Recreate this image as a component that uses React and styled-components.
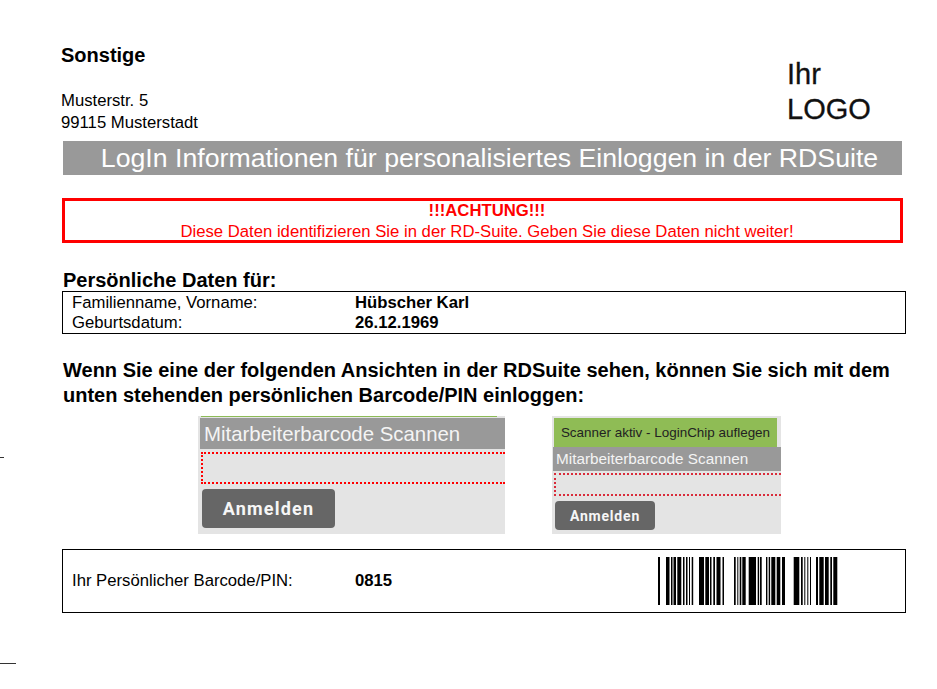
import React from 'react'
import styled, {createGlobalStyle} from 'styled-components'

const GlobalStyle = createGlobalStyle`
  html, body {
    margin: 0;
    background: #fff;
    color: #000;
    font-family: "Liberation Sans", Arial, sans-serif;
  }
`

const Page = styled.div`
  position: relative;
  width: 937px;
  height: 689px;
  padding: 44px 31px 0 61px;
  box-sizing: border-box;
  overflow: hidden;
`

const Header = styled.div`
  display: flex;
  justify-content: space-between;
  height: 97px;
`

const Company = styled.div`
  font-size: 20px;
  line-height: 22px;
  font-weight: 700;
`

const Address = styled.div`
  margin-top: 24px;
  font-size: 16.7px;
  line-height: 22px;
`

const Logo = styled.div`
  width: 119px;
  margin-top: 13px;
  font-size: 29px;
  line-height: 35px;
  color: #111;
  -webkit-text-stroke: 0.3px #111;
`

const Banner = styled.div`
  margin-left: 2px;
  width: 839px;
  height: 34px;
  padding-left: 14px;
  box-sizing: border-box;
  background: #999;
  color: #fff;
  font-size: 26.7px;
  line-height: 35px;
  text-align: center;
  white-space: nowrap;
`

const Alert = styled.div`
  margin: 23px 0 0 1px;
  width: 841px;
  height: 45px;
  padding-left: 9px;
  box-sizing: border-box;
  border: 3px solid #f00;
  color: #f00;
  font-size: 16.7px;
  line-height: 21px;
  text-align: center;
`

const AlertTitle = styled.div`
  margin-top: -1px;
  font-weight: 700;
`

const SectionTitle = styled.div`
  margin: 26px 0 0 2px;
  font-size: 20px;
  line-height: 22px;
  font-weight: 700;
`

const InfoTable = styled.div`
  margin-left: 1px;
  width: 844px;
  box-sizing: border-box;
  border: 1.5px solid #000;
  padding: 1px 0 0 9px;
  display: grid;
  grid-template-columns: 283px 1fr;
  font-size: 16.7px;
  line-height: 20px;
`

const Strong = styled.div`
  font-weight: 700;
`

const Headline = styled.div`
  margin: 24px 0 0 2px;
  font-size: 20px;
  line-height: 25px;
  font-weight: 700;
  white-space: nowrap;
`

const Shots = styled.div`
  display: flex;
  margin: 8px 0 0 137px;
  gap: 47px;
`

const Shot = styled.div`
  width: ${p => p.$w}px;
  height: 118px;
  background: #e4e4e4;
  display: flex;
  flex-direction: column;
  overflow: hidden;
`

const GreenLine = styled.div`
  height: 1px;
  margin: 0 8px 0 3px;
  background: #8dbb57;
`

const GreenBar = styled.div`
  height: 29px;
  margin: 2px 4px 0 2px;
  background: #8fbc55;
  color: #222;
  font-size: 13.45px;
  line-height: 29px;
  text-align: center;
  white-space: nowrap;
`

const ScanTitle = styled.div`
  margin: ${p => p.$large ? '1px 0 0 2px' : '0 0 0 1px'};
  height: ${p => p.$large ? 31 : 24}px;
  background: #999;
  color: #f4f4f4;
  font-size: ${p => p.$large ? 20.4 : 15.3}px;
  line-height: ${p => p.$large ? 32 : 24}px;
  padding-left: ${p => p.$large ? 4 : 3}px;
  white-space: nowrap;
`

const ScanInput = styled.div`
  margin: ${p => p.$large ? '3px 0 0 3px' : '2px 0 0 2px'};
  height: ${p => p.$large ? 32 : 23}px;
  box-sizing: border-box;
  border: 2px dotted ${p => p.$large ? '#f00' : '#d92b3a'};
  border-right: 0;
`

const LoginButton = styled.div`
  margin: ${p => p.$large ? '5px 0 0 4px' : '5px 0 0 3px'};
  width: ${p => p.$large ? 133 : 100}px;
  height: ${p => p.$large ? 39 : 29}px;
  border-radius: 4px;
  background: #666;
  color: #f6f6f6;
  font-family: Roboto, "Liberation Sans", sans-serif;
  font-size: ${p => p.$large ? 18 : 14}px;
  line-height: ${p => p.$large ? 40 : 30}px;
  font-weight: 700;
  text-align: center;
  letter-spacing: ${p => p.$large ? 1.2 : 0.8}px;
`

const BarcodeRow = styled.div`
  margin: 15px 0 0 1px;
  width: 844px;
  height: 64px;
  box-sizing: border-box;
  border: 1.5px solid #000;
  padding-left: 9px;
  display: grid;
  grid-template-columns: 283px 1fr auto;
  align-items: center;
  font-size: 16.7px;
`

const BarcodeSvg = styled.svg`
  display: block;
  margin-right: 67px;
`

const Tick = styled.div`
  position: absolute;
  left: 0;
  top: ${p => p.$top}px;
  width: ${p => p.$w}px;
  height: 1px;
  background: #333;
`

const bars = [
  [0, 2], [8, 3.5], [13, 1.5], [15.5, 2.5], [19.3, 4], [25, 1.5], [28, 1.5], [31, 1], [33.7, 1.5],
  [41, 5], [47.3, 3.7], [52, 1.5], [55.3, 1.7], [58.5, 4], [64.5, 1.5],
  [76, 1.7], [79.3, 1], [81.7, 1.6], [84.3, 3.4], [90.7, 7.3], [99.7, 1.4], [102, 1.7],
  [108, 1.4], [110.7, 1.4], [113.3, 4], [118.7, 3.6], [124, 3],
  [135.7, 5.6], [143, 1.7], [146.3, 1], [149.3, 1], [152, 1],
  [158, 2], [161.3, 4.4], [167, 3.7], [172.3, 1.7], [175.3, 4]
]

export default function App() {
  return (
    <Page>
      <GlobalStyle />
      <Tick $top={457} $w={4} />
      <Tick $top={663} $w={16} />

      <Header>
        <div>
          <Company>Sonstige</Company>
          <Address>Musterstr. 5<br />99115 Musterstadt</Address>
        </div>
        <Logo>Ihr<br />LOGO</Logo>
      </Header>

      <Banner>LogIn Informationen für personalisiertes Einloggen in der RDSuite</Banner>

      <Alert>
        <AlertTitle>!!!ACHTUNG!!!</AlertTitle>
        Diese Daten identifizieren Sie in der RD-Suite. Geben Sie diese Daten nicht weiter!
      </Alert>

      <SectionTitle>Persönliche Daten für:</SectionTitle>
      <InfoTable>
        <div>Familienname, Vorname:</div>
        <Strong>Hübscher Karl</Strong>
        <div>Geburtsdatum:</div>
        <Strong>26.12.1969</Strong>
      </InfoTable>

      <Headline>
        Wenn Sie eine der folgenden Ansichten in der RDSuite sehen, können Sie sich mit dem<br />
        unten stehenden persönlichen Barcode/PIN einloggen:
      </Headline>

      <Shots>
        <Shot $w={307}>
          <GreenLine />
          <ScanTitle $large>Mitarbeiterbarcode Scannen</ScanTitle>
          <ScanInput $large />
          <LoginButton $large>Anmelden</LoginButton>
        </Shot>
        <Shot $w={229}>
          <GreenBar>Scanner aktiv - LoginChip auflegen</GreenBar>
          <ScanTitle>Mitarbeiterbarcode Scannen</ScanTitle>
          <ScanInput />
          <LoginButton>Anmelden</LoginButton>
        </Shot>
      </Shots>

      <BarcodeRow>
        <div>Ihr Persönlicher Barcode/PIN:</div>
        <Strong>0815</Strong>
        <BarcodeSvg width="180" height="48" viewBox="0 0 180 48">
          {bars.map(([x, w]) => <rect key={x} x={x} y="0" width={w} height="48" fill="#000" />)}
        </BarcodeSvg>
      </BarcodeRow>
    </Page>
  )
}
